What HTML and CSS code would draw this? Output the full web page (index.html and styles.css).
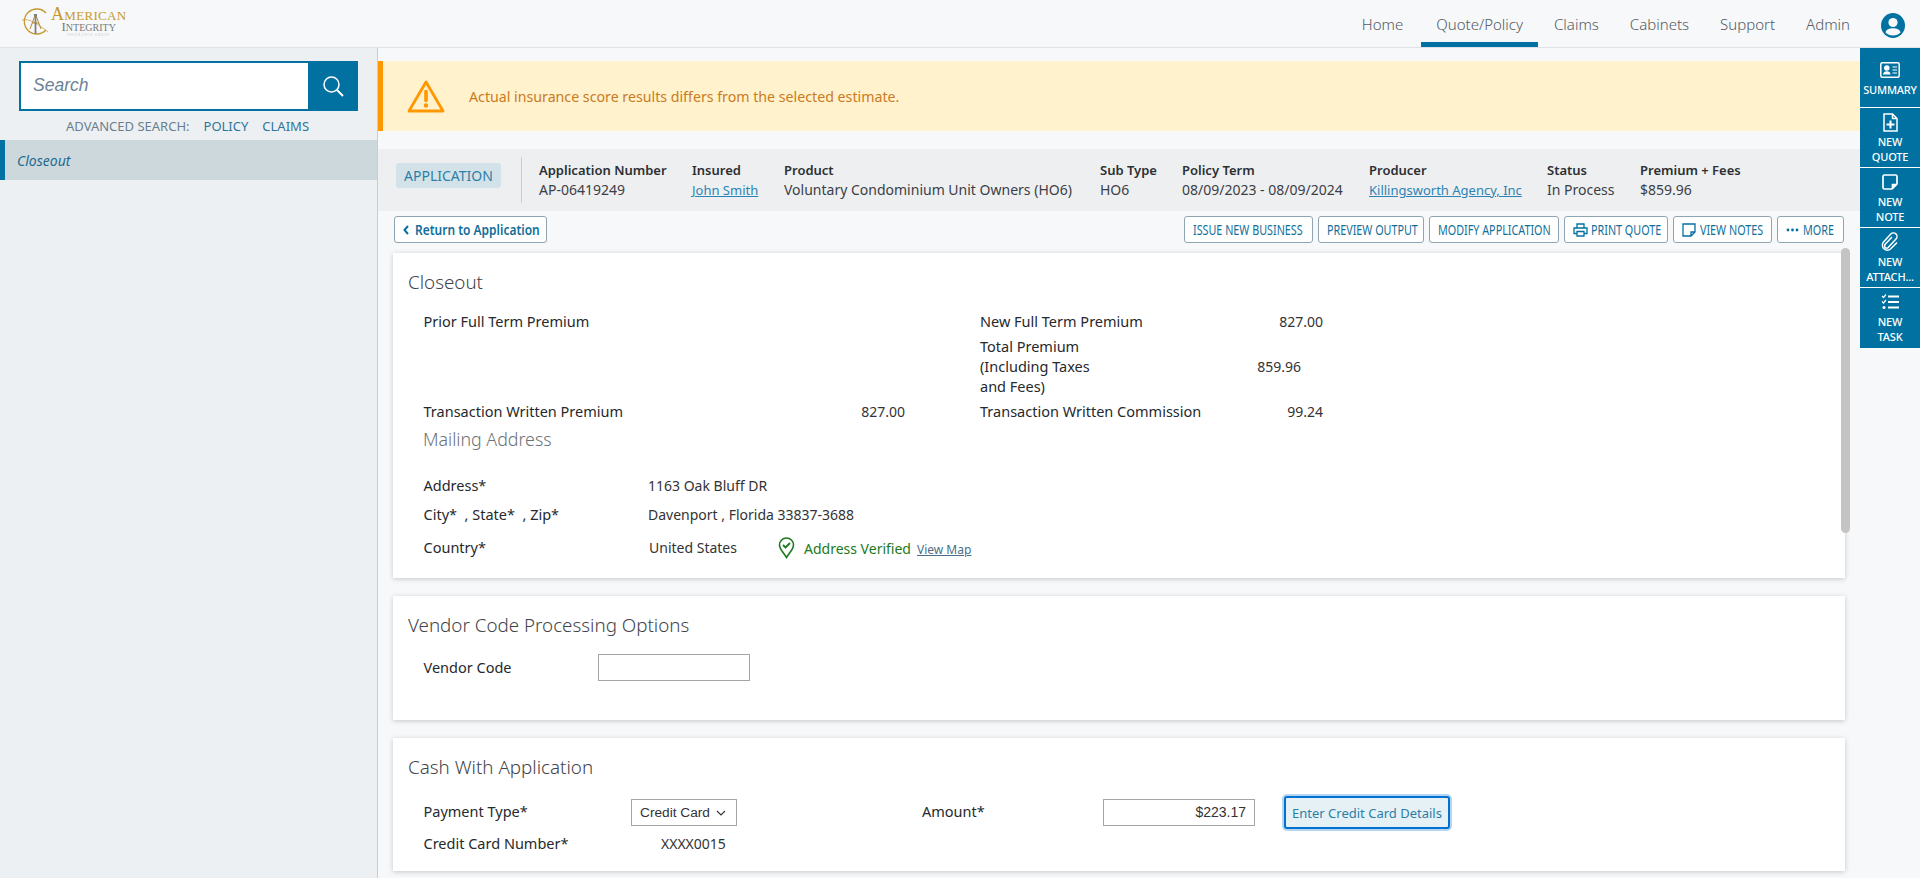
FILE: index.html
```html
<!DOCTYPE html>
<html lang="en">
<head>
    <meta charset="UTF-8">
    <title>Closeout - American Integrity</title>
    <link rel="stylesheet" href="styles.css">
</head>
<body>
    <header class="topbar">
        <div class="logo">
            <svg class="logo-mark" width="30" height="30" viewBox="0 0 30 30" fill="none">
                <path d="M26 7A12.5 12.5 0 1 0 26 24" stroke="#c8982f" stroke-width="1.3"/>
                <path d="M2 14c7-2 16 4 26 12" stroke="#c8982f" stroke-width=".7"/>
                <path d="M10 23L15.5 8L21 23M12 17h7" stroke="#b58a32" stroke-width="1"/>
                <path d="M14 9h3M15.5 9v19" stroke="#7d7f80" stroke-width="1.8"/>
            </svg>
            <div class="logo-text">
                <div class="logo-american"><span>A</span>MERICAN</div>
                <div class="logo-integrity"><span>I</span>NTEGRITY</div>
                <div class="logo-group">INSURANCE GROUP</div>
            </div>
        </div>
        <nav class="topnav">
            <a href="#">Home</a>
            <a href="#" class="active">Quote/Policy</a>
            <a href="#">Claims</a>
            <a href="#">Cabinets</a>
            <a href="#">Support</a>
            <a href="#">Admin</a>
        </nav>
        <svg class="user-icon" width="24" height="25" viewBox="0 0 24 25">
            <ellipse cx="12" cy="12.5" rx="12" ry="12.5" fill="#0071a1"/>
            <circle cx="12" cy="9.5" r="4.6" fill="#f6f8fa"/>
            <path d="M4.500 19.500c.6-3.200 3.800-4.300 7.500-4.300s6.900 1.100 7.500 4.300c-1.800 2-4.500 3-7.500 3s-5.700-1-7.500-3z" fill="#f6f8fa"/>
        </svg>
    </header>

    <div class="layout">
        <aside class="sidebar">
            <div class="search">
                <div class="search-input">Search</div>
                <button class="search-btn">
                    <svg width="22" height="22" viewBox="0 0 22 22" fill="none" stroke="#fff" stroke-width="1.500">
                        <circle cx="9.500" cy="9.500" r="7.500"/>
                        <path d="M15 15l6 6" stroke-width="2"/>
                    </svg>
                </button>
            </div>
            <div class="adv-search">
                <span>ADVANCED SEARCH:</span>
                <a href="#">POLICY</a>
                <a href="#">CLAIMS</a>
            </div>
            <div class="side-item">Closeout</div>
        </aside>

        <main class="content">
            <div class="alert">
                <svg width="38" height="33" viewBox="0 0 38 33" fill="none">
                    <path d="M19 2L2 31h34z" stroke="#ff9800" stroke-width="2.800" stroke-linejoin="round"/>
                    <path d="M19 11.500v9" stroke="#ff9800" stroke-width="3.600" stroke-linecap="round"/>
                    <circle cx="19" cy="25.500" r="2.200" fill="#ff9800"/>
                </svg>
                <span>Actual insurance score results differs from the selected estimate.</span>
            </div>

            <div class="infobar">
                <div class="badge">APPLICATION</div>
                <div class="info-fields">
                    <div class="info"><b>Application Number</b>AP-06419249</div>
                    <div class="info"><b>Insured</b><a href="#">John Smith</a></div>
                    <div class="info"><b>Product</b>Voluntary Condominium Unit Owners (HO6)</div>
                    <div class="info"><b>Sub Type</b>HO6</div>
                    <div class="info"><b>Policy Term</b>08/09/2023 - 08/09/2024</div>
                    <div class="info"><b>Producer</b><a href="#">Killingsworth Agency, Inc</a></div>
                    <div class="info"><b>Status</b>In Process</div>
                    <div class="info"><b>Premium + Fees</b>$859.96</div>
                </div>
            </div>

            <div class="actions">
                <a href="#" class="btn btn-back">
                    <svg width="6" height="10" viewBox="0 0 6 10" fill="none" stroke="#0071a1" stroke-width="2"><path d="M5 1L1.500 5L5 9"/></svg>
                    <span class="btn-text">Return to Application</span>
                </a>
                <div class="action-group">
                    <a href="#" class="btn btn-issue"><span class="btn-text">ISSUE NEW BUSINESS</span></a>
                    <a href="#" class="btn btn-preview"><span class="btn-text">PREVIEW OUTPUT</span></a>
                    <a href="#" class="btn btn-modify"><span class="btn-text">MODIFY APPLICATION</span></a>
                    <a href="#" class="btn btn-print">
                        <svg width="15" height="14" viewBox="0 0 15 14" fill="none" stroke="#0071a1" stroke-width="1.300">
                            <path d="M4 5V1h7v4M4 10.500H1V5h13v5.500h-3M4 8.500h7V13H4z"/>
                        </svg>
                        <span class="btn-text">PRINT QUOTE</span>
                    </a>
                    <a href="#" class="btn btn-notes">
                        <svg width="14" height="14" viewBox="0 0 14 14" fill="none" stroke="#0071a1" stroke-width="1.300">
                            <path d="M1 1h12v8l-4 4H1zM13 9H9v4"/>
                        </svg>
                        <span class="btn-text">VIEW NOTES</span>
                    </a>
                    <a href="#" class="btn btn-more">
                        <svg width="13" height="4" viewBox="0 0 13 4" fill="#0071a1"><circle cx="2" cy="2" r="1.400"/><circle cx="6.500" cy="2" r="1.400"/><circle cx="11" cy="2" r="1.400"/></svg>
                        <span class="btn-text">MORE</span>
                    </a>
                </div>
            </div>

            <div class="cards">
                <div class="scrollbar"></div>

                <section class="card card-closeout">
                    <h2>Closeout</h2>
                    <div class="premium-grid">
                        <div class="label">Prior Full Term Premium</div>
                        <div></div>
                        <div class="label col-right">New Full Term Premium</div>
                        <div class="num">827.00</div>

                        <div></div>
                        <div></div>
                        <div class="label col-right">Total Premium<br>(Including Taxes<br>and Fees)</div>
                        <div class="num num-total">859.96</div>

                        <div class="label">Transaction Written Premium</div>
                        <div class="num">827.00</div>
                        <div class="label col-right">Transaction Written Commission</div>
                        <div class="num">99.24</div>
                    </div>
                    <h3>Mailing Address</h3>
                    <div class="addr-row addr-first">
                        <div class="label">Address*</div>
                        <div>1163 Oak Bluff DR</div>
                    </div>
                    <div class="addr-row">
                        <div class="label">City* &nbsp;, State* &nbsp;, Zip*</div>
                        <div>Davenport , Florida 33837-3688</div>
                    </div>
                    <div class="addr-row addr-last">
                        <div class="label">Country*</div>
                        <div class="country">United States</div>
                        <svg class="pin" width="17" height="22" viewBox="0 0 17 22" fill="none" stroke="#1b7a1b" stroke-width="1.600">
                            <path d="M8.500 20.500C5 15 1.500 12 1.500 8a7 7 0 0 1 14 0c0 4-3.500 7-7 12.500z"/>
                            <path d="M5 8l2.500 2.500L12 6" stroke-width="1.800"/>
                        </svg>
                        <span class="verified">Address Verified</span>
                        <a href="#" class="view-map">View Map</a>
                    </div>
                </section>

                <section class="card card-vendor">
                    <h2>Vendor Code Processing Options</h2>
                    <div class="vendor-row">
                        <div class="label">Vendor Code</div>
                        <div class="field field-vendor"></div>
                    </div>
                </section>

                <section class="card card-cash">
                    <h2>Cash With Application</h2>
                    <div class="pay-row">
                        <div class="label label-pay">Payment Type*</div>
                        <div class="field field-select">Credit Card
                            <svg width="10" height="6" viewBox="0 0 10 6" fill="none" stroke="#333" stroke-width="1.100"><path d="M1 1l4 4 4-4"/></svg>
                        </div>
                        <div class="label label-amount">Amount*</div>
                        <div class="field field-amount">$223.17</div>
                        <button class="cc-btn">Enter Credit Card Details</button>
                    </div>
                    <div class="card-row">
                        <div class="label label-cc">Credit Card Number*</div>
                        <div>XXXX0015</div>
                    </div>
                </section>
            </div>
        </main>

        <aside class="rail">
            <a href="#" class="rail-item rail-summary">
                <span class="rail-icon">
                    <svg width="20" height="16" viewBox="0 0 20 16" fill="none" stroke="#fff" stroke-width="1.500">
                        <rect x=".8" y=".8" width="18.400" height="14.400" rx="1.500"/>
                        <circle cx="6.800" cy="6" r="2" fill="#fff"/>
                        <path d="M3 12.500c0-4.500 7.600-4.500 7.600 0z" fill="#fff" stroke="none"/>
                        <path d="M12.500 5h4.500M12.500 8h4.500M12.500 11h4.500" stroke-width="1.200"/>
                    </svg>
                </span>
                <span>SUMMARY</span>
            </a>
            <a href="#" class="rail-item">
                <span class="rail-icon">
                    <svg width="15" height="19" viewBox="0 0 15 19" fill="none" stroke="#fff" stroke-width="1.500">
                        <path d="M1 1h8.500L14 5.500V18H1zM9.500 1v4.500H14"/>
                        <path d="M7.500 7.500v8M3.500 11.500h8" stroke-width="2"/>
                    </svg>
                </span>
                <span>NEW<br>QUOTE</span>
            </a>
            <a href="#" class="rail-item">
                <span class="rail-icon">
                    <svg width="16" height="16" viewBox="0 0 16 16" fill="none" stroke="#fff" stroke-width="1.700">
                        <path d="M1 2.500A1.500 1.500 0 0 1 2.500 1h11A1.500 1.500 0 0 1 15 2.500V10l-5 5H2.500A1.500 1.500 0 0 1 1 13.500z"/>
                        <path d="M15 10.500h-4.500V15" fill="#fff"/>
                    </svg>
                </span>
                <span>NEW<br>NOTE</span>
            </a>
            <a href="#" class="rail-item">
                <span class="rail-icon">
                    <svg width="18" height="20" viewBox="0 0 18 20" fill="none" stroke="#fff" stroke-width="1.500">
                        <path d="M11 5L4 12.500a2.200 2.200 0 0 0 3.200 3L15 7a3.600 3.600 0 0 0-5.200-5L2.500 10a5 5 0 0 0 7.300 6.800L16 10.500"/>
                    </svg>
                </span>
                <span>NEW<br>ATTACH...</span>
            </a>
            <a href="#" class="rail-item">
                <span class="rail-icon">
                    <svg width="18" height="16" viewBox="0 0 18 16" fill="none" stroke="#fff">
                        <path d="M1 2l1.500 1.500L5 .5M1 7.500L2.500 9 5 6" stroke-width="1.200"/>
                        <path d="M7 2.500h11M7 8h11M7 13.500h11" stroke-width="1.800"/>
                        <circle cx="3" cy="13.500" r="1.500" fill="#fff" stroke="none"/>
                    </svg>
                </span>
                <span>NEW<br>TASK</span>
            </a>
        </aside>
    </div>
</body>
</html>
```

FILE: styles.css
```css
* {
    box-sizing: border-box;
}
html, body {
    height: 100%;
}
body {
    margin: 0;
    overflow: hidden;
    font-family: "Noto Sans", Arial, sans-serif;
    font-size: 14px;
    line-height: 20px;
    color: #333;
    background: #f6f8fa;
}
a {
    text-decoration: none;
}

/* top bar */
.topbar {
    height: 48px;
    display: flex;
    align-items: center;
    padding: 0 15px 0 20px;
    background: #f6f8fa;
    border-bottom: 1px solid #dde3e7;
}
.logo {
    display: flex;
    align-items: flex-start;
    height: 47px;
    padding-top: 6px;
}
.logo-text {
    font-family: "Liberation Serif", serif;
    margin-left: 1px;
    text-align: center;
}
.logo-american {
    color: #c8982f;
    font-size: 13px;
    line-height: 13px;
    margin-top: 2px;
    letter-spacing: .3px;
}
.logo-american span {
    font-size: 18px;
}
.logo-integrity {
    color: #77797b;
    font-size: 10px;
    line-height: 10px;
}
.logo-integrity span {
    font-size: 13px;
}
.logo-group {
    color: #c4c4c4;
    font-size: 3px;
    line-height: 4px;
    letter-spacing: 1px;
}
.topnav {
    display: flex;
    margin-left: auto;
    height: 47px;
    gap: 1px;
}
.topnav a {
    padding: 14px 15px 0;
    color: #555b61;
    font-size: 15px;
    font-weight: 300;
    border-bottom: 5px solid transparent;
}
.topnav a:first-child {
    margin-right: 2px;
}
.topnav a.active {
    border-bottom-color: #0071a1;
}
.user-icon {
    margin-left: 16px;
    margin-top: 4px;
}

/* columns */
.layout {
    display: flex;
    height: calc(100% - 48px);
}
.sidebar {
    width: 378px;
    flex: none;
    background: #ecf0f3;
    border-right: 1px solid #c6ced3;
    padding-top: 13px;
}
.search {
    display: flex;
    height: 50px;
    margin: 0 19px;
}
.search-input {
    flex: 1;
    background: #fff;
    border: 2px solid #0071a1;
    border-right: 0;
    padding: 12px 12px;
    font: italic 17.500px/20px "Liberation Sans", Arial, sans-serif;
    color: #6b8395;
}
.search-btn {
    width: 50px;
    border: 0;
    padding: 0;
    background: #0071a1;
    display: flex;
    align-items: center;
    justify-content: center;
}
.adv-search {
    display: flex;
    justify-content: center;
    gap: 14px;
    height: 29px;
    padding-top: 5px;
    padding-right: 2px;
    font-size: 13px;
    color: #6a7f8e;
}
.adv-search a {
    color: #2f749a;
}
.side-item {
    height: 40px;
    border-left: 5px solid #0071a1;
    background: #cdd8dd;
    padding: 11px 12px;
    font-style: italic;
    color: #1c6b8f;
}

.content {
    flex: 1;
    min-width: 0;
    padding-top: 13px;
}
.alert {
    height: 70px;
    display: flex;
    align-items: center;
    gap: 24px;
    padding-left: 24px;
    background: #fff2cc;
    border-left: 5px solid #ff9800;
    color: #cc7a1e;
    font-size: 14.200px;
}
.alert span {
    padding-top: 2px;
}
.infobar {
    height: 62px;
    margin-top: 18px;
    display: flex;
    align-items: center;
    padding-left: 18px;
    background: #eeeff1;
}
.badge {
    height: 25px;
    width: 105px;
    margin-bottom: 9px;
    text-align: center;
    padding-top: 3px;
    border-radius: 3px;
    background: #d3e2e8;
    color: #2d7fa5;
}
.info-fields {
    display: grid;
    grid-template-columns: 153px 92px 316px 82px 187px 178px 93px auto;
    height: 46px;
    margin-left: 20px;
    padding-left: 17px;
    padding-top: 3px;
    border-left: 1px solid #c8cdd0;
}
.info {
    white-space: nowrap;
    color: #3b4046;
}
.info b {
    display: block;
    font-weight: 600;
    color: #2b2f33;
    font-size: 13px;
}
.info a {
    color: #2b84b5;
    font-size: 13px;
    text-decoration: underline;
}

/* buttons row; the text is narrowed since no condensed face is installed */
.actions {
    display: flex;
    justify-content: space-between;
    height: 42px;
    padding: 5px 16px 0 16px;
}
.action-group {
    display: flex;
    gap: 5px;
}
.btn {
    height: 27px;
    padding: 0 8px;
    display: flex;
    align-items: center;
    gap: 3px;
    background: #fff;
    border: 1px solid #8fa6b2;
    border-radius: 3px;
    color: #0f6f9a;
    font-size: 14px;
    white-space: nowrap;
}
.btn svg {
    flex: none;
}
.btn-text {
    display: inline-block;
    transform: scaleX(.77);
    transform-origin: left center;
}
.btn-back {
    width: 153px;
    gap: 6px;
    font-weight: 600;
}
.btn-back .btn-text {
    transform: scaleX(.856);
}
.btn-issue {
    width: 129px;
}
.btn-preview {
    width: 106px;
}
.btn-modify {
    width: 130px;
}
.btn-print {
    width: 104px;
}
.btn-notes {
    width: 99px;
    gap: 4px;
}
.btn-more {
    width: 67px;
    gap: 4px;
}

/* cards */
.cards {
    position: relative;
    padding: 0 15px;
}
.scrollbar {
    position: absolute;
    top: -5px;
    right: 10px;
    width: 9px;
    height: 285px;
    border-radius: 5px;
    background: #c4c4c4;
}
.card {
    background: #fff;
    box-shadow: 0 1px 5px rgba(0, 0, 0, .2);
    padding: 16px 15px 0;
    margin-bottom: 18px;
    line-height: 20px;
}
.card h2 {
    margin: 0;
    font-size: 18.800px;
    line-height: 26px;
    font-weight: 300;
    color: #3f444a;
}
.card h3 {
    margin: 2px 0 0 15px;
    font-size: 17.800px;
    line-height: 26px;
    font-weight: 300;
    color: #6d7276;
}
.card-closeout {
    height: 325px;
}
.card-vendor {
    height: 124px;
}
.card-cash {
    height: 133px;
}
.label {
    font-size: 14.500px;
    color: #26292d;
    padding-bottom: 2px;
}
.premium-grid {
    display: grid;
    grid-template-columns: 300px 181.500px 318px 100px;
    grid-template-rows: 25px 65px 25px;
    margin: 14px 0 0 15.500px;
    align-items: center;
}
.col-right {
    padding-left: 75px;
}
.num {
    text-align: right;
}
.num-total {
    margin-right: 22px;
}
.addr-row {
    display: flex;
    align-items: center;
    margin-left: 15.500px;
    height: 29px;
}
.addr-row .label {
    width: 224.500px;
    flex: none;
}
.addr-first {
    margin-top: 19px;
}
.addr-last {
    height: 36px;
    padding-top: 2px;
}
.country {
    margin-left: 1px;
    width: 129px;
}
.pin {
    margin-right: 9px;
}
.verified {
    color: #1b7a1b;
    margin-right: 6px;
    padding-top: 2px;
}
.view-map {
    font-size: 12px;
    color: #4a6f8a;
    text-decoration: underline;
    padding-top: 3px;
}

/* form bits */
.field {
    background: #fff;
    border: 1px solid #a0a5a8;
    height: 27px;
    font-family: "Liberation Sans", Arial, sans-serif;
    font-size: 13.500px;
}
.vendor-row {
    display: flex;
    align-items: center;
    margin: 16px 0 0 15.500px;
}
.vendor-row .label {
    width: 174.500px;
}
.field-vendor {
    width: 152px;
}
.pay-row {
    display: flex;
    align-items: center;
    height: 33px;
    margin: 16px 0 0 15.500px;
}
.pay-row .label {
    padding-bottom: 4px;
}
.label-pay {
    width: 207.500px;
}
.field-select {
    width: 106px;
    padding: 2px 8px;
    display: flex;
    align-items: center;
    gap: 6px;
    white-space: nowrap;
    font-size: 13.700px;
}
.label-amount {
    width: 181px;
    margin-left: 185px;
}
.field-amount {
    width: 152px;
    padding: 2px 8px;
    text-align: right;
    font-size: 14px;
}
.cc-btn {
    width: 166px;
    height: 33px;
    margin-left: 29px;
    border: 2px solid #0071d1;
    border-radius: 3px;
    box-shadow: 0 0 0 2px #b5d6f0;
    background: #e6f1f6;
    color: #2b7ea6;
    font-family: "Noto Sans", Arial, sans-serif;
    font-size: 13px;
    padding: 0;
}
.card-row {
    display: flex;
    align-items: center;
    height: 26px;
    margin: 2px 0 0 15.500px;
}
.label-cc {
    width: 237.500px;
}

/* right rail */
.rail {
    width: 60px;
    flex: none;
    align-self: flex-start;
}
.rail-item {
    height: 60px;
    display: flex;
    flex-direction: column;
    align-items: center;
    padding-top: 2px;
    background: #0071a1;
    border-bottom: 1px solid #fff;
    color: #fff;
    font-size: 11px;
    font-weight: 500;
    line-height: 15px;
    text-align: center;
    white-space: nowrap;
    letter-spacing: -.2px;
}
.rail-icon {
    height: 24px;
    flex: none;
    display: flex;
    align-items: center;
}
.rail-summary {
    padding-top: 10px;
}
.rail-item:last-child {
    border-bottom: 0;
}
```
